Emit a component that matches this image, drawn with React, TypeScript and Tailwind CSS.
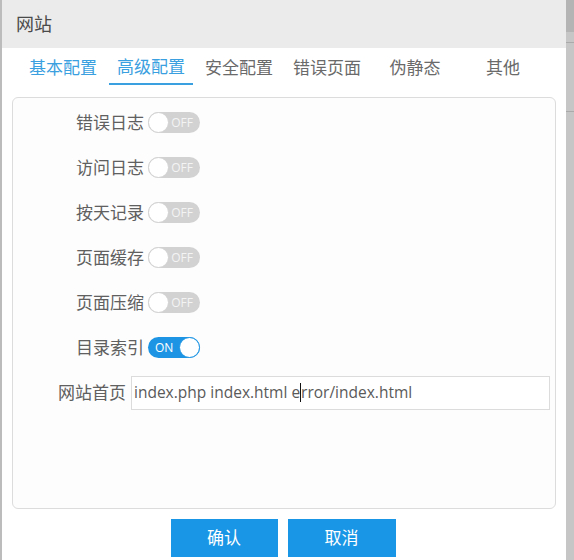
import React from "react";

const FONT = { fontFamily: '"Open Sans", "Noto Sans CJK SC", sans-serif' };

function Toggle({ on }: { on: boolean }) {
  if (on) {
    return (
      <div className="relative flex h-[21px] w-[52px] items-center rounded-full bg-[#1e95e4]">
        <span className="pl-[7px] text-[12px] leading-none text-white">ON</span>
        <span className="absolute right-0 top-0 h-[21px] w-[21px] rounded-full border border-[#1e95e4] bg-white" />
      </div>
    );
  }
  return (
    <div className="relative flex h-[21px] w-[52px] items-center justify-end rounded-full bg-[#d2d2d2]">
      <span className="pr-[7px] text-[12px] leading-none text-[#f4f4f4]">OFF</span>
      <span className="absolute left-0 top-0 h-[21px] w-[21px] rounded-full border border-[#d2d2d2] bg-white" />
    </div>
  );
}

const rows: [string, boolean][] = [
  ["错误日志", false],
  ["访问日志", false],
  ["按天记录", false],
  ["页面缓存", false],
  ["页面压缩", false],
  ["目录索引", true],
];

const tabs = ["基本配置", "高级配置", "安全配置", "错误页面", "伪静态", "其他"];

export default function App() {
  return (
    <div className="flex h-[560px] w-[574px] overflow-hidden bg-[#c6c6c6]" style={FONT}>
      <div className="flex h-full w-[566px] flex-col border-l-2 border-[#bcbcbc] bg-white">
        <div className="flex h-[48px] items-center bg-[#ebebeb] pl-[14px] text-[18px] text-[#4a4a4a]">
          网站
        </div>
        <div className="flex pl-[17px] pt-[2px]">
          {tabs.map((t, i) => (
            <div
              key={t}
              className={`flex h-[35px] items-center justify-center text-[17px] ${
                i < 2 ? "text-[#3ba0e0]" : "text-[#6a6a6a]"
              } ${i === 1 ? "mx-[2px] w-[84px] border-b-2 border-[#3ba0e0]" : "w-[88px]"}`}
            >
              {t}
            </div>
          ))}
        </div>
        <div className="mx-[10px] mt-[12px] h-[412px] rounded-[6px] border border-[#dcdcdc] bg-[#fdfdfd] pt-[2px]">
          {rows.map(([label, on]) => (
            <div key={label} className="flex h-[45px] items-center">
              <div className="w-[131px] text-right text-[17px] text-[#606060]">{label}</div>
              <div className="ml-[4px]">
                <Toggle on={on} />
              </div>
            </div>
          ))}
          <div className="flex h-[45px] items-center">
            <div className="w-[113px] text-right text-[17px] text-[#606060]">网站首页</div>
            <div className="ml-[5px] flex h-[34px] w-[419px] items-center border border-[#dcdcdc] bg-white pl-[2px] text-[15.5px] text-[#5a5a5a]">
              <span>index.php index.html e</span>
              <span className="inline-block h-[19px] w-px bg-[#111]" />
              <span>rror/index.html</span>
            </div>
          </div>
        </div>
        <div className="mt-[10px] flex justify-center gap-[10px] pr-[2px]">
          <button className="flex h-[38px] w-[107px] items-center justify-center bg-[#1a96e6] text-[17px] text-white">
            确认
          </button>
          <button className="flex h-[38px] w-[108px] items-center justify-center bg-[#1a96e6] text-[17px] text-white">
            取消
          </button>
        </div>
      </div>
      <div className="flex flex-1 flex-col">
        <div className="h-[32px] bg-[#b4b4b4]" />
        <div className="mt-[10px] h-[70px] border-y border-[#aaa]" />
      </div>
    </div>
  );
}
